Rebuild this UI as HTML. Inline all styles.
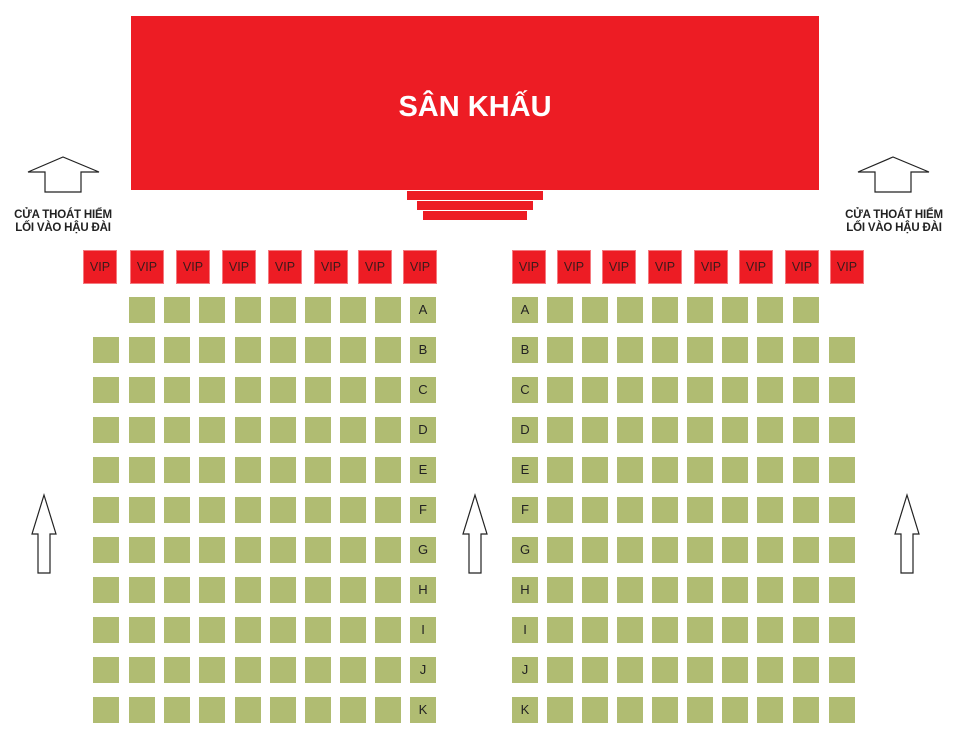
<!DOCTYPE html>
<html><head><meta charset="utf-8"><style>
body{margin:0;width:953px;height:730px;background:#fff;position:relative;overflow:hidden;font-family:"Liberation Sans",sans-serif}
.r{position:absolute;background:#ed1c24}
.v{position:absolute;width:34px;height:34px;background:#ed1c24;color:#3a1a1a;font-size:12.5px;line-height:34px;text-align:center;box-shadow:0 0 0 1px #f47a80 inset}
.s{position:absolute;width:26px;height:26px;background:#b0bc72;color:#222;font-size:13px;line-height:26px;text-align:center}
.t{position:absolute;font-weight:bold;font-size:11.5px;line-height:13px;color:#222;text-align:center;width:130px;letter-spacing:-0.2px}
</style></head><body>
<div class="r" style="left:131px;top:16px;width:688px;height:174px"></div>
<div style="position:absolute;left:131px;top:91px;width:688px;text-align:center;color:#fff;font-weight:bold;font-size:29px">SÂN KHẤU</div>
<div class="r" style="left:407px;top:191px;width:136px;height:9px"></div>
<div class="r" style="left:417px;top:201px;width:116px;height:9px"></div>
<div class="r" style="left:423px;top:211px;width:104px;height:9px"></div>
<svg style="position:absolute;left:0;top:0" width="953" height="730" fill="#fff" stroke="#222" stroke-width="1.2">
<polygon points="28,172 63,157 99,172 81,172 81,192 45,192 45,172"/>
<polygon points="858,172 893,157 929,172 911,172 911,192 875,192 875,172"/>
<polygon points="44,495 56,534 50,534 50,573 38,573 38,534 32,534"/>
<polygon points="475,495 487,534 481,534 481,573 469,573 469,534 463,534"/>
<polygon points="907,495 919,534 913,534 913,573 901,573 901,534 895,534"/>
</svg>
<div class="t" style="left:-2px;top:209px">CỬA THOÁT HIỂM<br>LỐI VÀO HẬU ĐÀI</div>
<div class="t" style="left:829px;top:209px">CỬA THOÁT HIỂM<br>LỐI VÀO HẬU ĐÀI</div>
<div id="c"></div>
<script>
var h='';
var vl=[83,130,176,222,268,314,358,403],vr=[512,557,602,648,694,739,785,830];
vl.concat(vr).forEach(function(x){h+='<div class="v" style="left:'+x+'px;top:250px">VIP</div>';});
var L=[93,129,164,199,235,270,305,340,375,410],R=[512,547,582,617,652,687,722,757,793,829];
var rows='ABCDEFGHIJK';
for(var i=0;i<11;i++){var y=297+i*40;
for(var j=0;j<10;j++){
if(!(i==0&&j==0))h+='<div class="s" style="left:'+L[j]+'px;top:'+y+'px">'+(j==9?rows[i]:'')+'</div>';
if(!(i==0&&j==9))h+='<div class="s" style="left:'+R[j]+'px;top:'+y+'px">'+(j==0?rows[i]:'')+'</div>';
}}
document.getElementById('c').innerHTML=h;
</script>
</body></html>
